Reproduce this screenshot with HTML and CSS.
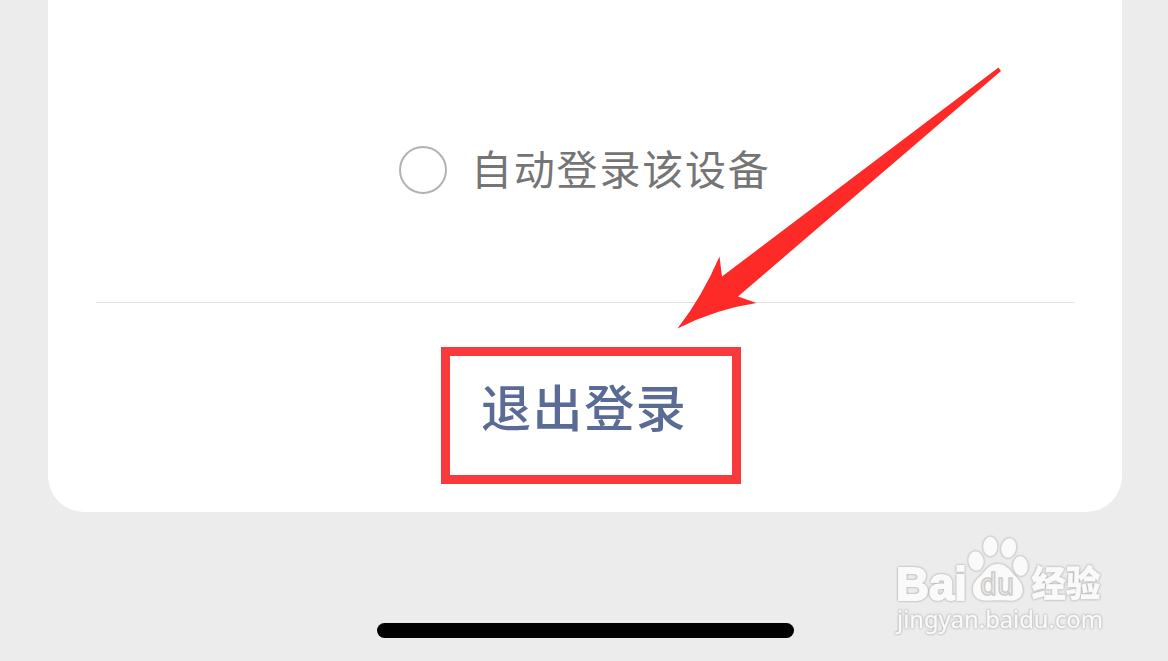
FILE: index.html
```
<!DOCTYPE html>
<html lang="zh-CN">

<head>
    <meta charset="UTF-8" />
    <title>退出登录</title>
    <link rel="stylesheet" href="styles.css">
</head>

<body>

    <main class="card">
        <label class="auto-login">
            <span class="radio"></span>
            <span class="auto-text">自动登录该设备</span>
        </label>
        <div class="actions">
            <button class="logout" type="button">退出登录</button>
        </div>
    </main>

    <div class="home-bar"></div>

    <!-- Flecha -->
    <svg class="arrow" width="330" height="270" viewBox="675 64 330 270">
        <path d="M998.5 67.5L1001 71L738 296.5L756.5 303Q716 309 677.5 328.5Q702 297 719.5 256.5L722 276.5Z" />
    </svg>

    <!-- Marca de agua -->
    <svg class="watermark" width="240" height="130" viewBox="880 520 240 130">
        <g class="mark">
            <text class="bai" x="896" y="600" textLength="71" lengthAdjust="spacingAndGlyphs">Bai</text>
            <ellipse cx="976" cy="561" rx="7.5" ry="9.5" transform="rotate(-8 976 561)" />
            <ellipse cx="990.3" cy="546.5" rx="7" ry="9.7" />
            <ellipse cx="1008.7" cy="548" rx="7.3" ry="9.7" transform="rotate(12 1008.7 548)" />
            <ellipse cx="1020.5" cy="566" rx="7.3" ry="9.7" transform="rotate(-6 1020.5 566)" />
            <path d="M998 564C1006 564 1010 570 1014 575C1019 580 1023 584 1022.5 591C1022 598 1016 601 1010 600.5C1003 600 994 600 987 600.5C979 601 973.5 597 973 590C972.5 583 977 579 981.5 575C986 570 989 564 998 564Z" />
            <text class="jingyan" x="1031.5" y="597" textLength="69" lengthAdjust="spacingAndGlyphs">经验</text>
            <text class="site" x="897" y="628" textLength="206" lengthAdjust="spacingAndGlyphs">jingyan.baidu.com</text>
        </g>
        <text class="du" x="980" y="594.5" textLength="34" lengthAdjust="spacingAndGlyphs">du</text>
    </svg>

</body>

</html>
```
FILE: styles.css
```
body {
    margin: 0;
    height: 661px;
    background: #ececec;
    font-family: "Liberation Sans", "Noto Sans CJK SC", sans-serif;
    display: flex;
    flex-direction: column;
    align-items: center;
    overflow: hidden;
}

.card {
    box-sizing: border-box;
    width: 1074px;
    height: 512px;
    margin-left: 2px;
    padding: 0 48px;
    background: #fff;
    border-radius: 0 0 36px 36px;
}

.auto-login {
    box-sizing: border-box;
    height: 303px;
    padding: 141px 0 0 303px;
    display: flex;
    align-items: flex-start;
    gap: 24px;
    border-bottom: 1px solid #e2e2e2;
}

.radio {
    box-sizing: border-box;
    width: 48px;
    height: 48px;
    margin-top: 5px;
    border: 2px solid #b2b2b2;
    border-radius: 50%;
}

.auto-text {
    font-size: 41px;
    line-height: 60px;
    letter-spacing: 1.8px;
    color: #757575;
    white-space: nowrap;
}

.actions {
    padding: 44px 0 0 345px;
}

.logout {
    box-sizing: border-box;
    display: block;
    width: 300px;
    height: 137px;
    padding: 0 0 21px 31px;
    border: 9px solid #f93a3c;
    background: #fff;
    color: #5a6c96;
    font-family: inherit;
    font-size: 50px;
    font-weight: 500;
    letter-spacing: 1.6px;
    text-align: left;
}

.home-bar {
    width: 417px;
    height: 15px;
    margin: 111px 0 0 3px;
    border-radius: 8px;
    background: #000;
}

.arrow {
    position: absolute;
    left: 675px;
    top: 64px;
    fill: #fe2a28;
}

.watermark {
    position: absolute;
    left: 880px;
    top: 520px;
}

.mark {
    fill: #fafafa;
    stroke: #fafafa;
    stroke-width: 0.5px;
    filter: drop-shadow(0 0 0.8px #aaa) drop-shadow(0 0 0.5px #ccc);
}

.bai {
    font-size: 46px;
    font-weight: bold;
    stroke-width: 2px;
}

.jingyan {
    font-size: 36px;
    font-weight: 900;
}

.site {
    font-family: "Noto Sans", sans-serif;
    font-size: 24px;
    stroke-width: 0.3px;
}

.du {
    font-family: "Noto Sans", sans-serif;
    font-size: 30px;
    font-weight: 500;
    fill: #ececec;
    stroke: #cbcbcb;
    stroke-width: 1.6px;
}
```
